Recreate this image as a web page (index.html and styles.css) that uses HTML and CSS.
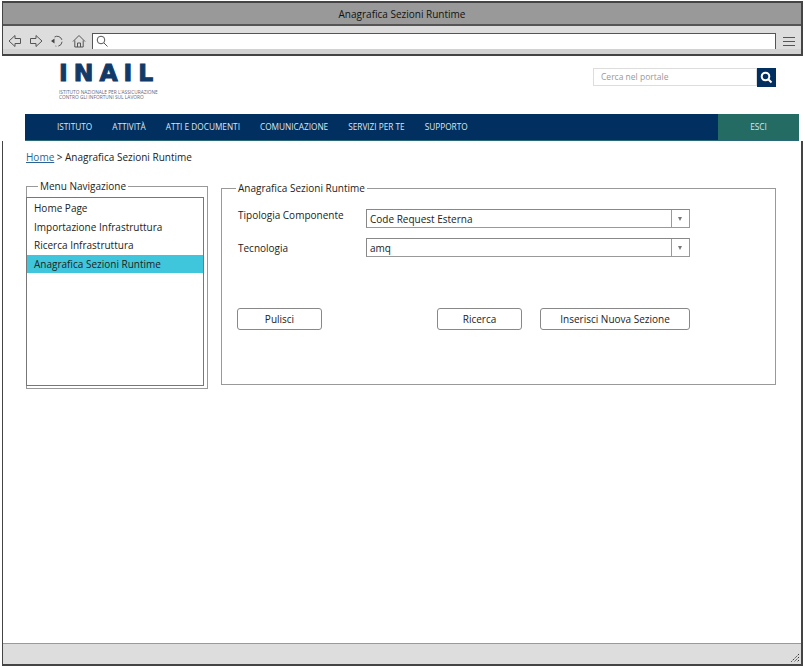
FILE: index.html
```html
<!DOCTYPE html>
<html lang="it">
<head>
  <meta charset="UTF-8" />
  <title>Anagrafica Sezioni Runtime</title>
  <link rel="stylesheet" href="styles.css">
</head>
<body>
  <div class="window">
    <div class="titlebar">Anagrafica Sezioni Runtime</div>

    <div class="toolbar">
      <svg class="tool" width="14" height="14" viewBox="0 0 14 14"><path d="M7 1.500 1 7l6 5.500V9.500h5.500v-5H7z"/></svg>
      <svg class="tool" width="14" height="14" viewBox="0 0 14 14"><path d="M7 1.500 13 7l-6 5.500V9.500H1.500v-5H7z"/></svg>
      <svg class="tool" width="14" height="14" viewBox="0 0 14 14"><path d="M4.500 3A5 5 0 1 1 5.500 12" stroke-dasharray="9 2 6 2"/><path class="solid" d="M1 7l3.500-2.500v5z"/></svg>
      <svg class="tool" width="14" height="14" viewBox="0 0 14 14"><path d="M1 7.500 7 1.500l6 6M2.800 6.500v6.500h8.400V6.500M5.500 13V9h3v4"/></svg>
      <div class="address">
        <svg width="12" height="12" viewBox="0 0 12 12"><circle cx="5" cy="5" r="3.800"/><path d="m8 8 3.500 3.500"/></svg>
      </div>
      <div class="burger"><span></span><span></span><span></span></div>
    </div>

    <div class="page">
      <div class="top">
        <header class="site-head">
          <div class="logo">
            <div class="logo-name">INAIL</div>
            <div class="logo-sub">ISTITUTO NAZIONALE PER L'ASSICURAZIONE<br>CONTRO GLI INFORTUNI SUL LAVORO</div>
          </div>
          <div class="search">
            <div class="search-input">Cerca nel portale</div>
            <div class="search-btn">
              <svg width="13" height="13" viewBox="0 0 13 13"><circle cx="5.500" cy="5.500" r="3.800"/><path d="m8.500 8.500 3 3"/></svg>
            </div>
          </div>
        </header>

        <nav class="mainnav">
          <ul>
            <li>ISTITUTO</li>
            <li>ATTIVITÀ</li>
            <li>ATTI E DOCUMENTI</li>
            <li>COMUNICAZIONE</li>
            <li>SERVIZI PER TE</li>
            <li>SUPPORTO</li>
          </ul>
          <div class="esci">ESCI</div>
        </nav>
      </div>

      <div class="crumbs"><a href="#">Home</a><span class="sep">&gt;</span>Anagrafica Sezioni Runtime</div>

      <div class="content">
        <fieldset class="menu">
          <legend>Menu Navigazione</legend>
          <ul class="menu-list">
            <li>Home Page</li>
            <li>Importazione Infrastruttura</li>
            <li>Ricerca Infrastruttura</li>
            <li class="active">Anagrafica Sezioni Runtime</li>
          </ul>
        </fieldset>

        <fieldset class="panel">
          <legend>Anagrafica Sezioni Runtime</legend>
          <div class="form-row">
            <label class="label-up">Tipologia Componente</label>
            <div class="select"><span class="select-value">Code Request Esterna</span><span class="select-arrow"></span></div>
          </div>
          <div class="form-row">
            <label>Tecnologia</label>
            <div class="select"><span class="select-value">amq</span><span class="select-arrow"></span></div>
          </div>
          <div class="actions">
            <button class="btn btn-clear">Pulisci</button>
            <button class="btn btn-search">Ricerca</button>
            <button class="btn btn-new">Inserisci Nuova Sezione</button>
          </div>
        </fieldset>
      </div>
    </div>

    <div class="statusbar">
      <svg width="10" height="10" viewBox="0 0 10 10"><path d="M9 1 1 9M9 4 4 9M9 7 7 9"/></svg>
    </div>
  </div>
</body>
</html>
```

FILE: styles.css
```css
html, body {
  margin: 0;
  padding: 0;
  background: #fff;
}

body {
  font-family: "Open Sans", "Noto Sans", sans-serif;
  font-size: 10px;
  color: #222;
}

ul {
  margin: 0;
  padding: 0;
  list-style: none;
}

/* Cornice del browser */
.window {
  box-sizing: border-box;
  width: 801px;
  height: 665px;
  margin: 1px 0 0 2px;
  border: 2px solid #444;
  border-left-width: 1px;
  display: flex;
  flex-direction: column;
}

.titlebar {
  height: 21px;
  background: #999;
  border-bottom: 2px solid #555;
  text-align: center;
  line-height: 22px;
  color: #111;
}

.toolbar {
  box-sizing: border-box;
  height: 30px;
  flex: none;
  background: linear-gradient(#ddd 23px, #d2d2d2 23px);
  border-bottom: 2px solid #444;
  padding: 7px 0 0 5px;
  display: flex;
  align-items: flex-start;
}

.tool {
  margin-right: 7.200px;
  margin-top: 1px;
  flex: none;
}

.tool path {
  fill: none;
  stroke: #555;
  stroke-width: 1;
}

.tool .solid {
  fill: #444;
  stroke: none;
}

.address {
  box-sizing: border-box;
  margin-left: -1px;
  width: 684px;
  height: 16px;
  background: #fff;
  border: 1px solid #555;
  border-bottom: none;
  padding: 1px 0 0 3px;
}

.address svg {
  display: block;
}

.address circle, .address path {
  fill: none;
  stroke: #555;
}

.burger {
  margin: 4px 0 0 7px;
  width: 12px;
  display: flex;
  flex-direction: column;
  gap: 3px;
}

.burger span {
  display: block;
  height: 1px;
  background: #555;
}

.page {
  flex: 1;
  padding-left: 22px;
}

/* Testata del sito: copre il bordo della finestra */
.top {
  margin: 0 -2px 0 -23px;
  padding-left: 23px;
  background: #fff;
}

.site-head {
  height: 58px;
  display: flex;
  justify-content: space-between;
  padding-right: 27px;
}

.logo {
  padding: 6px 0 0 34px;
}

.logo-name {
  font-family: "DejaVu Sans", sans-serif;
  font-weight: 700;
  font-size: 23.500px;
  line-height: 23px;
  letter-spacing: 6px;
  color: #123a68;
  -webkit-text-stroke: 1px #123a68;
}

.logo-sub {
  margin-top: 5px;
  font-size: 4.800px;
  line-height: 4.600px;
  color: #667;
  white-space: nowrap;
}

.search {
  display: flex;
  margin-top: 12px;
  height: 19px;
}

.search-input {
  box-sizing: border-box;
  width: 164px;
  height: 18px;
  border: 1px solid #ddd;
  padding-left: 7px;
  line-height: 16px;
  font-size: 8.500px;
  color: #999;
}

.search-btn {
  width: 19px;
  background: #012f60;
  display: flex;
  align-items: center;
  justify-content: center;
}

.search-btn circle, .search-btn path {
  fill: none;
  stroke: #fff;
  stroke-width: 2;
}

/* Barra di navigazione */
.mainnav {
  width: 774px;
  height: 27px;
  box-sizing: border-box;
  background: #012f60;
  border-bottom: 1px solid #2a6a78;
  display: flex;
  justify-content: space-between;
  color: #dfe6ee;
  font-size: 8.250px;
  line-height: 26px;
}

.mainnav ul {
  display: flex;
  gap: 20px;
  padding-left: 32px;
}

.esci {
  width: 81px;
  background: #236b63;
  text-align: center;
}

.crumbs {
  margin: 9px 0 0 1px;
  line-height: 15px;
  color: #222;
}

.crumbs a {
  color: #2a6496;
}

.sep {
  margin: 0 2.500px;
}

/* Contenuto */
.content {
  display: flex;
  gap: 13px;
  margin: 14px 0 0 1px;
  align-items: flex-start;
}

fieldset {
  margin: 0;
  min-width: 0;
  box-sizing: border-box;
  border: 1px solid #999;
}

legend {
  line-height: 14px;
  padding: 0 2px;
}

.menu {
  width: 182px;
  height: 210px;
  padding: 0;
}

.menu legend {
  margin-left: 11px;
}

.menu-list {
  box-sizing: border-box;
  width: 178px;
  height: 189px;
  margin-top: 4px;
  margin-left: -1px;
  border: 1px solid #777;
  padding-top: 1px;
}

.menu-list li {
  height: 18.500px;
  line-height: 18.500px;
  padding-left: 7px;
}

.menu-list .active {
  background: #3fc6dc;
}

.panel {
  width: 555px;
  height: 204px;
  margin-top: 2px;
  padding: 14px 85px 0 16px;
}

.panel legend {
  margin-left: -2px;
}

.form-row {
  display: grid;
  grid-template-columns: 128px 324px;
  margin-bottom: 10px;
  align-items: center;
}

.label-up {
  margin-top: -7px;
}

.form-row label {
  line-height: 14px;
}

.select {
  box-sizing: border-box;
  height: 19px;
  display: flex;
  background: #fff;
  border: 1px solid #999;
  border-top-color: #888;
  border-left-color: #888;
}

.select-value {
  flex: 1;
  padding-left: 3px;
  line-height: 18px;
}

.select-arrow {
  width: 17px;
  border-left: 1px solid #999;
  position: relative;
}

.select-arrow::after {
  content: "";
  position: absolute;
  left: 6px;
  top: 7px;
  border-left: 2.500px solid transparent;
  border-right: 2.500px solid transparent;
  border-top: 4px solid #777;
}

.actions {
  display: flex;
  margin-top: 51px;
  margin-left: -1px;
}

.btn {
  box-sizing: border-box;
  height: 22px;
  padding: 0;
  background: #fff;
  border: 1px solid #888;
  border-radius: 3px;
  font: inherit;
  color: #222;
}

.btn-clear {
  width: 85px;
}

.btn-search {
  width: 85px;
  margin-left: 115px;
}

.btn-new {
  width: 150px;
  margin-left: 18px;
}

.statusbar {
  box-sizing: border-box;
  height: 21px;
  flex: none;
  background: #ddd;
  border-top: 1px solid #999;
  display: flex;
  justify-content: flex-end;
  align-items: flex-end;
  padding: 0 1px 1px 0;
}

.statusbar svg {
  display: block;
}

.statusbar path {
  fill: none;
  stroke: #333;
  stroke-dasharray: 1.400 1;
}
```
